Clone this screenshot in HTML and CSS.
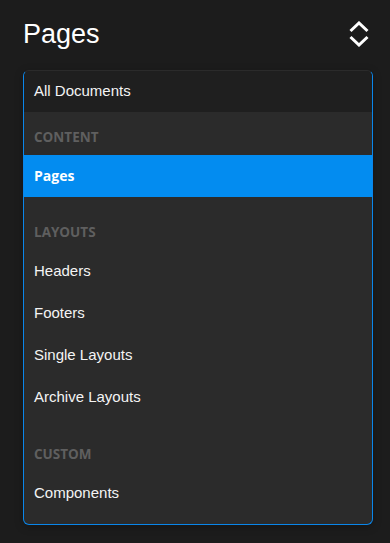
FILE: index.html
```html
<!DOCTYPE html>
<html lang="en">
<head>
    <meta charset="UTF-8">
    <meta name="viewport" content="width=device-width, initial-scale=1.0">
    <title>Pages</title>
    <link rel="stylesheet" href="styles.css">
</head>
<body>
    <div class="title-bar">
        <h1>Pages</h1>
        <svg class="switch-icon" width="22" height="26" viewBox="0 0 22 26" aria-hidden="true">
            <path d="M2.5 10 L11 2 L19.5 10" />
            <path d="M2.5 16 L11 24 L19.5 16" />
        </svg>
    </div>

    <div class="menu">
        <div class="item top-item">All Documents</div>

        <div class="group first">
            <div class="group-label">Content</div>
            <div class="item active">Pages</div>
        </div>

        <div class="group">
            <div class="group-label">Layouts</div>
            <div class="item">Headers</div>
            <div class="item">Footers</div>
            <div class="item">Single Layouts</div>
            <div class="item">Archive Layouts</div>
        </div>

        <div class="group last">
            <div class="group-label">Custom</div>
            <div class="item">Components</div>
        </div>
    </div>
</body>
</html>
```

FILE: styles.css
```css
html, body {
    margin: 0;
    padding: 0;
    background-color: #1c1c1c;
    font-family: "Liberation Sans", Arial, sans-serif;
    color: #f2f2f2;
}
body {
    padding: 18px 17px 0 23px;
    height: 543px;
    box-sizing: border-box;
}
.title-bar {
    display: flex;
    align-items: center;
    justify-content: space-between;
    height: 32px;
    margin-bottom: 20px;
}
h1 {
    margin: 0;
    font-size: 27px;
    line-height: 32px;
    font-weight: normal;
    color: #ffffff;
}
.switch-icon {
    margin-right: 3px;
    margin-top: -1px;
}
.switch-icon path {
    fill: none;
    stroke: #ffffff;
    stroke-width: 3;
    stroke-linecap: butt;
    stroke-linejoin: miter;
}
.menu {
    background-color: #2b2b2b;
    border: 1px solid #0a86ea;
    border-top-color: transparent;
    border-radius: 6px;
    overflow: hidden;
    padding-bottom: 10px;
    box-shadow: 0 2px 8px rgba(0, 0, 0, 0.25);
}
.item {
    height: 42px;
    line-height: 42px;
    padding-left: 10px;
    font-size: 15px;
    color: #f4f4f4;
}
.top-item {
    background-color: #1f1f1f;
    margin-top: -1px;
}
.item.active {
    background-color: #038cf0;
    color: #ffffff;
    font-family: "Open Sans", "Noto Sans", sans-serif;
    font-weight: bold;
    font-size: 14px;
}
.group {
    margin-top: 10px;
}
.group.first {
    margin-top: 0;
}
.group.last {
    margin-top: 11px;
}
.group-label {
    padding: 16px 10px 9px;
    line-height: 18px;
    font-family: "Open Sans", "Noto Sans", sans-serif;
    font-weight: bold;
    font-size: 13.5px;
    text-transform: uppercase;
    color: #5f5f5f;
}
```
